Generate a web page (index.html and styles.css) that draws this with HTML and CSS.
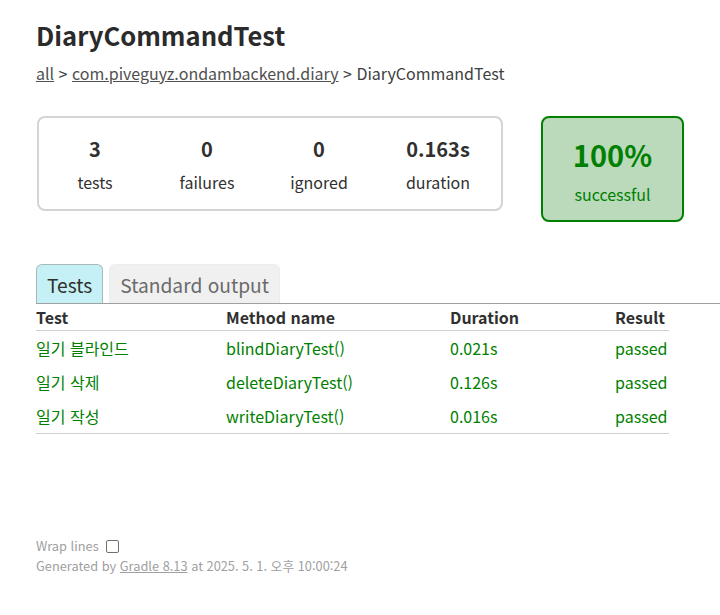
FILE: index.html
```html
<!DOCTYPE html>
<html lang="ko">
<head>
<meta charset="utf-8">
<title>Test results - DiaryCommandTest</title>
<link rel="stylesheet" href="styles.css">
</head>
<body>
<div class="content">
  <h1 class="title">DiaryCommandTest</h1>
  <div class="breadcrumbs">
    <a href="#">all</a> &gt; <a href="#">com.piveguyz.ondambackend.diary</a> &gt; DiaryCommandTest
  </div>

  <div class="summary">
    <div class="counters">
      <div class="counter"><div class="num">3</div><div class="lbl">tests</div></div>
      <div class="counter"><div class="num">0</div><div class="lbl">failures</div></div>
      <div class="counter"><div class="num">0</div><div class="lbl">ignored</div></div>
      <div class="counter"><div class="num">0.163s</div><div class="lbl">duration</div></div>
    </div>
    <div class="rate">
      <div class="rate-num">100%</div>
      <div class="rate-lbl">successful</div>
    </div>
  </div>

  <div class="tabs">
    <div class="tab selected">Tests</div>
    <div class="tab">Standard output</div>
  </div>

  <table class="results">
    <colgroup>
      <col class="c1"><col class="c2"><col class="c3"><col class="c4">
    </colgroup>
    <thead>
      <tr><th>Test</th><th>Method name</th><th>Duration</th><th>Result</th></tr>
    </thead>
    <tbody>
      <tr><td>일기 블라인드</td><td>blindDiaryTest()</td><td>0.021s</td><td>passed</td></tr>
      <tr><td>일기 삭제</td><td>deleteDiaryTest()</td><td>0.126s</td><td>passed</td></tr>
      <tr><td>일기 작성</td><td>writeDiaryTest()</td><td>0.016s</td><td>passed</td></tr>
    </tbody>
  </table>

  <div class="footer">
    <div class="wrap"><span>Wrap lines</span><span class="checkbox"></span></div>
    <div class="gen">Generated by <a href="#">Gradle 8.13</a> at 2025. 5. 1. 오후 10:00:24</div>
  </div>
</div>
</body>
</html>
```
FILE: styles.css
```css
html, body {
  margin: 0;
  padding: 0;
  background: #ffffff;
  overflow: hidden;
}

body {
  font-family: "Noto Sans CJK KR", "Noto Sans", sans-serif;
  font-size: 16px;
  color: #303030;
}

a, a:visited {
  color: #303030;
  text-decoration: underline;
}

.content {
  padding: 19px 36px 0 36px;
}

.title {
  margin: 0;
  font-size: 25.6px;
  line-height: 32px;
  font-weight: 700;
  color: #2b2b2b;
}

.breadcrumbs {
  margin-top: 12px;
  font-size: 16px;
  line-height: 20px;
  color: #404040;
}

.breadcrumbs a {
  color: #505050;
}

.summary {
  display: flex;
  align-items: flex-start;
  margin-top: 33px;
  margin-left: 1px;
}

.counters {
  display: grid;
  grid-template-columns: 112px 112px 112px 126px;
  border: 2px solid #d4d4d4;
  border-radius: 8px;
  padding: 19px 0 16px 0;
}

.counter {
  text-align: center;
}

.num {
  font-size: 20px;
  line-height: 24px;
  font-weight: 700;
}

.lbl {
  margin-top: 10px;
  font-size: 16px;
  line-height: 22px;
}

.rate {
  margin-left: 38px;
  width: 140px;
  height: 102px;
  border: 2px solid #008000;
  border-radius: 8px;
  background: #bbd9bb;
  color: #008000;
  text-align: center;
}

.rate-num {
  margin-top: 19px;
  font-size: 29px;
  line-height: 34px;
  font-weight: 700;
}

.rate-lbl {
  margin-top: 13px;
  font-size: 16px;
  line-height: 20px;
}

.tabs {
  display: flex;
  gap: 6px;
  margin-top: 42px;
  margin-right: -36px;
  border-bottom: 1px solid #a0a0a0;
}

.tab {
  height: 38px;
  padding: 0 10px;
  font-size: 19.2px;
  line-height: 40px;
  color: #6a6a6a;
  background: #f0f0f0;
  border: 1px solid #ececec;
  border-bottom: none;
  border-radius: 6px 6px 0 0;
}

.tab.selected {
  color: #303030;
  background: #c5f0f5;
  border-color: #a8b8bb;
}

.results {
  border-collapse: collapse;
  width: 633px;
  table-layout: fixed;
  border-bottom: 1px solid #d0d0d0;
}

.c1 { width: 190px; }
.c2 { width: 224px; }
.c3 { width: 165px; }
.c4 { width: 54px; }

.results th {
  text-align: left;
  font-weight: 700;
  height: 24px;
  line-height: 26px;
  padding: 0;
  border-bottom: 1px solid #d0d0d0;
  white-space: nowrap;
}

.results td {
  height: 34px;
  padding: 0;
  line-height: 34px;
  color: #008000;
  white-space: nowrap;
}

.footer {
  margin-top: 102px;
  font-size: 12.8px;
  color: #a0a0a0;
  white-space: nowrap;
}

.footer a {
  color: #a0a0a0;
}

.wrap {
  display: flex;
  align-items: center;
  gap: 7px;
  line-height: 20px;
}

.checkbox {
  display: inline-block;
  width: 11px;
  height: 11px;
  border: 1px solid #707070;
  border-radius: 2px;
  background: #ffffff;
}

.gen {
  line-height: 20px;
}
```
